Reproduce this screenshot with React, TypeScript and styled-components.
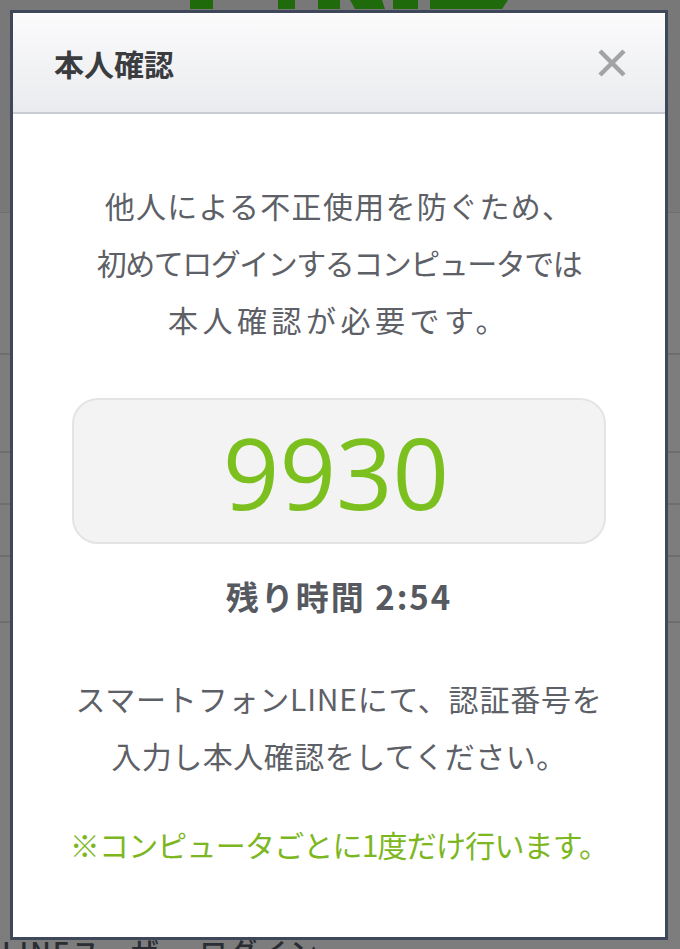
import React from "react";
import styled, { createGlobalStyle } from "styled-components";

const Global = createGlobalStyle`
  html, body { margin: 0; padding: 0; }
  body {
    background: #7c7c7c;
    font-family: "Noto Sans CJK JP", "Noto Sans", sans-serif;
  }
`;

const Page = styled.div`
  position: relative;
  width: 680px;
  height: 949px;
  overflow: hidden;
  background: #7d7d7d;
`;

const Backdrop = styled.div`
  display: flex;
  flex-direction: column;
  height: 949px;
`;

const TopBand = styled.div`
  height: 212px;
  background: #787878;
  border-bottom: 1px solid #6f6f6f;
  display: flex;
  justify-content: flex-start;
  padding-left: 190px;
`;

const Stripe = styled.div<{ $h: number }>`
  height: ${(p) => p.$h}px;
  border-bottom: 2px solid #6e6e6e;
`;

const Filler = styled.div`
  flex: 1;
`;

const BackText = styled.div`
  font-family: "Noto Sans CJK JP", sans-serif;
  font-size: 28px;
  font-weight: 500;
  color: #2a2e34;
  padding-left: 2px;
  line-height: 28px;
  height: 12px;
  letter-spacing: 2px;
`;

const Dialog = styled.div`
  position: absolute;
  left: 10px;
  top: 10px;
  width: 652px;
  height: 924px;
  border: 3px solid #3f475b;
  background: #ffffff;
  display: flex;
  flex-direction: column;
`;

const Header = styled.div`
  height: 101px;
  flex: none;
  box-sizing: border-box;
  background: linear-gradient(#fbfbfc, #eaebee);
  border-top: 1px solid #ffffff;
  border-bottom: 2px solid #c9ccd3;
  display: flex;
  align-items: center;
  justify-content: space-between;
  padding: 0 38px 0 41px;
`;

const Title = styled.h1`
  margin: 0;
  font-size: 30px;
  font-weight: 700;
  color: #3a3c40;
`;

const Close = styled.button`
  border: 0;
  background: none;
  padding: 0;
  width: 30px;
  height: 30px;
  display: flex;
  cursor: pointer;
`;

const Body = styled.div`
  display: flex;
  flex-direction: column;
  align-items: center;
  padding-top: 63px;
`;

const Paragraph = styled.p<{ $mt?: number; $color?: string }>`
  margin: ${(p) => p.$mt ?? 0}px 0 0;
  font-size: 30px;
  line-height: 57px;
  color: ${(p) => p.$color ?? "#5d6066"};
  text-align: center;
`;

const Line = styled.span<{ $ls?: number }>`
  display: block;
  white-space: nowrap;
  letter-spacing: ${(p) => p.$ls ?? 0}px;
`;

const CodeBox = styled.div`
  margin-top: 50px;
  width: 534px;
  height: 146px;
  box-sizing: border-box;
  border: 2px solid #e4e4e4;
  border-radius: 26px;
  background: #f3f3f3;
  display: flex;
  align-items: center;
  justify-content: center;
`;

const Code = styled.span`
  font-family: "Open Sans", "Noto Sans", sans-serif;
  font-size: 99px;
  font-weight: 400;
  color: #7cc020;
  line-height: 1;
  margin-right: 6px;
`;

const Timer = styled.div`
  margin-top: 32px;
  font-size: 33px;
  line-height: 40px;
  font-weight: 700;
  color: #565a60;
  letter-spacing: 2px;
`;

const Logo = () => (
  <svg width="330" height="10" viewBox="0 0 330 10">
    <g fill="#1f6a0b">
      <rect x="0" y="0" width="23" height="9" />
      <rect x="88" y="0" width="17" height="9" />
      <rect x="128" y="0" width="22" height="9" />
      <polygon points="160,0 192,0 195,9 165,9" />
      <rect x="203" y="0" width="25" height="9" />
      <polygon points="240,0 318,0 312,9 240,9" />
    </g>
  </svg>
);

export default function App() {
  return (
    <Page>
      <Global />
      <Backdrop>
        <TopBand>
          <Logo />
        </TopBand>
        <Stripe $h={140} />
        <Stripe $h={96} />
        <Stripe $h={50} />
        <Stripe $h={50} />
        <Stripe $h={64} />
        <Filler />
        <BackText>LINEユーザー ログイン</BackText>
      </Backdrop>
      <Dialog>
        <Header>
          <Title>本人確認</Title>
          <Close aria-label="close">
            <svg width="30" height="30" viewBox="0 0 30 30">
              <path d="M3 3 L27 27 M27 3 L3 27" stroke="#a2a3a5" strokeWidth="4.5" />
            </svg>
          </Close>
        </Header>
        <Body>
          <Paragraph>
            <Line $ls={1.3}>他人による不正使用を防ぐため、</Line>
            <Line $ls={-1.5}>初めてログインするコンピュータでは</Line>
            <Line $ls={4.5}>本人確認が必要です。</Line>
          </Paragraph>
          <CodeBox>
            <Code>9930</Code>
          </CodeBox>
          <Timer>残り時間 2:54</Timer>
          <Paragraph $mt={54}>
            <Line $ls={0.8}>スマートフォンLINEにて、認証番号を</Line>
            <Line $ls={0.5}>入力し本人確認をしてください。</Line>
          </Paragraph>
          <Paragraph $mt={32} $color="#7cb722">
            <Line $ls={-0.8}>※コンピュータごとに1度だけ行います。</Line>
          </Paragraph>
        </Body>
      </Dialog>
    </Page>
  );
}
